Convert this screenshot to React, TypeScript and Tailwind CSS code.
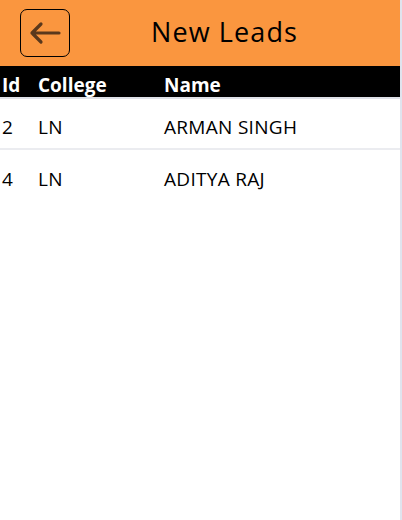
import React from "react";

const rows = [
  { id: 2, college: "LN", name: "ARMAN SINGH" },
  { id: 4, college: "LN", name: "ADITYA RAJ" },
];

export default function App() {
  return (
    <div
      className="w-[402px] h-[520px] bg-white flex"
      style={{ fontFamily: '"Open Sans", "Noto Sans", sans-serif' }}
    >
      <div className="w-[400px] h-full flex flex-col">
        <div className="h-[66px] bg-[#fa963f] flex items-center relative">
          <div className="ml-[20px] w-[50px] h-[48px] border-[1.5px] border-black rounded-[7px] flex items-center justify-center">
            <svg width="34" height="24" viewBox="0 0 34 24" fill="none">
              <path
                d="M31 12H4M13 3L4 12L13 21"
                stroke="#5a381c"
                strokeWidth="3.2"
                strokeLinecap="round"
                strokeLinejoin="round"
              />
            </svg>
          </div>
          <div className="absolute left-[151px] top-[14px] text-[27px] leading-[36px] tracking-[1.1px] text-black">
            New Leads
          </div>
        </div>
        <div className="h-[33px] bg-black flex items-center pt-[6px] text-white font-bold text-[19px] leading-[26px] border-b-2 border-[#dfe1e8]">
          <div className="w-[38px] pl-[2px]">Id</div>
          <div className="w-[126px]">College</div>
          <div>Name</div>
        </div>
        {rows.map((r, i) => (
          <div
            key={r.id}
            className={
              "h-[51px] flex items-center pt-[7px] text-[19px] leading-[26px] tracking-[0.3px] text-black" +
              (i === 0 ? " border-b-2 border-[#ebecf0]" : "")
            }
          >
            <div className="w-[38px] pl-[2px]">{r.id}</div>
            <div className="w-[126px]">{r.college}</div>
            <div>{r.name}</div>
          </div>
        ))}
      </div>
      <div className="w-[2px] h-full bg-[#e0e4ee]" />
    </div>
  );
}
